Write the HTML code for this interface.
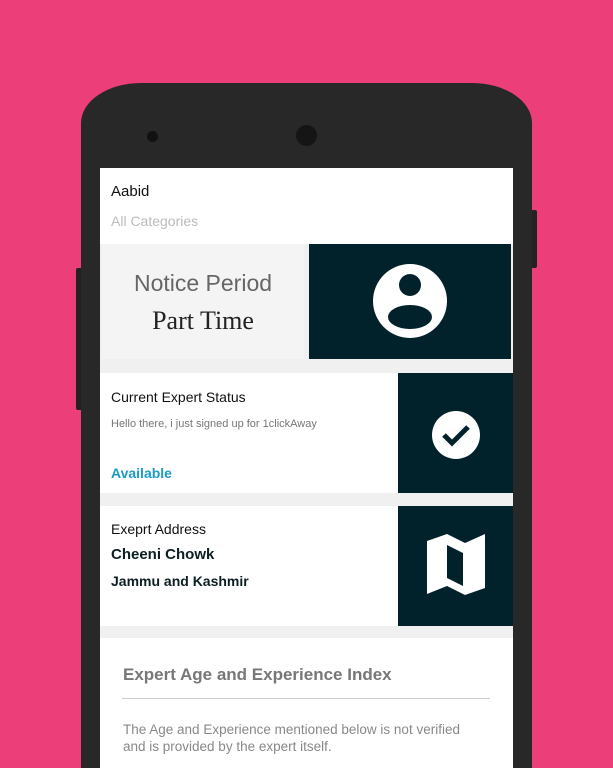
<!DOCTYPE html>
<html><head><style>
*{margin:0;padding:0;box-sizing:border-box}
html,body{width:613px;height:768px;overflow:hidden}
body{background:#ec3f79;position:relative;font-family:"Liberation Sans",sans-serif}
.abs{position:absolute}
.phone{left:81px;top:83px;width:451px;height:685px;background:#282828;border-radius:60px 60px 0 0/40px 40px 0 0}
.screen{left:100px;top:168px;width:413px;height:600px;background:#f0f0f0;overflow:hidden}
.dark{background:#02222b}
</style></head><body>
<div class="abs" style="left:530px;top:210px;width:7px;height:58px;background:#222;border-radius:2px"></div>
<div class="abs" style="left:76px;top:268px;width:7px;height:142px;background:#222;border-radius:2px"></div>
<div class="abs phone"></div>
<div class="abs" style="left:147px;top:131px;width:11px;height:11px;border-radius:50%;background:#111"></div>
<div class="abs" style="left:296px;top:125px;width:21px;height:21px;border-radius:50%;background:#151515"></div>
<div class="abs screen">
 <div class="abs" style="left:0;top:0;width:413px;height:76px;background:#fff"></div>
 <div class="abs" style="left:11px;top:15px;font-size:15px;color:#111">Aabid</div>
 <div class="abs" style="left:11px;top:45px;font-size:14px;color:#bbb">All Categories</div>
 <div class="abs" style="left:2px;top:76px;width:202px;height:115px;background:#f4f4f4"></div>
 <div class="abs" style="left:2px;top:102px;width:202px;text-align:center;font-size:23px;color:#666">Notice Period</div>
 <div class="abs" style="left:2px;top:138px;width:202px;text-align:center;font-size:26px;color:#222;font-family:'Liberation Serif',serif">Part Time</div>
 <div class="abs dark" style="left:209px;top:76px;width:202px;height:115px"></div>
 <svg class="abs" style="left:273px;top:95px" width="74" height="76" viewBox="0 0 74 76"><circle cx="37" cy="38" r="37" fill="#fff"/><circle cx="37" cy="22" r="11" fill="#02222b"/><ellipse cx="37" cy="54" rx="22" ry="12" fill="#02222b"/></svg>
 <div class="abs" style="left:0;top:205px;width:413px;height:120px;background:#fff"></div>
 <div class="abs" style="left:11px;top:221px;font-size:14px;color:#111">Current Expert Status</div>
 <div class="abs" style="left:11px;top:250px;font-size:11px;color:#777">Hello there, i just signed up for 1clickAway</div>
 <div class="abs" style="left:11px;top:297px;font-size:14px;color:#1a9bc6;font-weight:bold">Available</div>
 <div class="abs dark" style="left:298px;top:205px;width:115px;height:120px"></div>
 <svg class="abs" style="left:332px;top:243px" width="48" height="48" viewBox="0 0 48 48"><circle cx="24" cy="24" r="24" fill="#fff"/><path d="M12 24l8 8 16-16" stroke="#02222b" stroke-width="5" fill="none"/></svg>
 <div class="abs" style="left:0;top:338px;width:413px;height:120px;background:#fff"></div>
 <div class="abs" style="left:11px;top:353px;font-size:14px;color:#111">Exeprt Address</div>
 <div class="abs" style="left:11px;top:378px;font-size:15px;color:#0c1e22;font-weight:bold">Cheeni Chowk</div>
 <div class="abs" style="left:11px;top:405px;font-size:14px;color:#0c1e22;font-weight:bold">Jammu and Kashmir</div>
 <div class="abs dark" style="left:298px;top:338px;width:115px;height:120px"></div>
 <svg class="abs" style="left:327px;top:366px" width="58" height="62" viewBox="0 0 58 62"><path d="M0 7L20 0L38 9L58 0V54L38 61L20 52L0 60Z" fill="#fff"/><path d="M20 11L36 19V52L20 44Z" fill="#02222b"/></svg>
 <div class="abs" style="left:0;top:470px;width:413px;height:130px;background:#fff"></div>
 <div class="abs" style="left:23px;top:497px;font-size:17px;color:#777;font-weight:bold">Expert Age and Experience Index</div>
 <div class="abs" style="left:22px;top:530px;width:368px;height:1px;background:#ccc"></div>
 <div class="abs" style="left:23px;top:553px;font-size:13.5px;color:#888;line-height:17px">The Age and Experience mentioned below is not verified<br>and is provided by the expert itself.</div>
</div>
</body></html>
